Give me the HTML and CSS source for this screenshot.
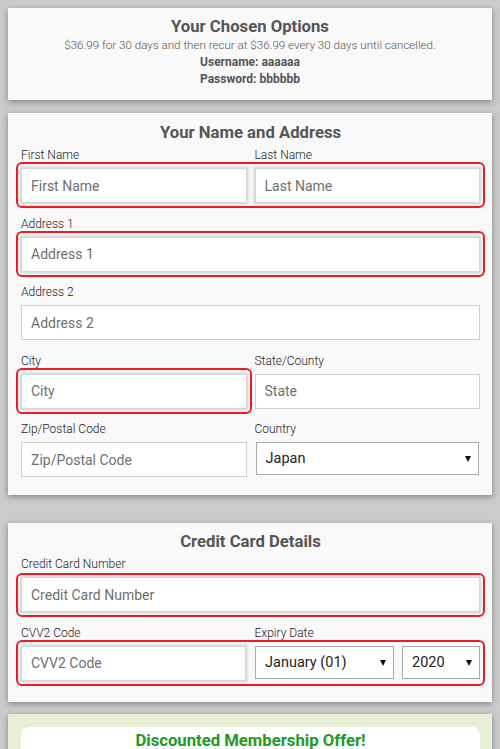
FILE: index.html
```html
<!DOCTYPE html>
<html lang="en">
<head>
<meta charset="utf-8">
<title>Checkout</title>
<link rel="stylesheet" href="styles.css">
</head>
<body>
<div class="page">
  <section class="card card-options">
    <h2 class="card-title">Your Chosen Options</h2>
    <p class="summary">$36.99 for 30 days and then recur at $36.99 every 30 days until cancelled.</p>
    <p class="cred">Username: aaaaaa</p>
    <p class="cred">Password: bbbbbb</p>
  </section>

  <section class="card card-form">
    <h2 class="card-title">Your Name and Address</h2>
    <div class="rows">
      <div class="row">
        <div class="labels two"><label>First Name</label><label>Last Name</label></div>
        <div class="controls two err">
          <input class="field bad" placeholder="First Name">
          <input class="field bad" placeholder="Last Name">
        </div>
      </div>
      <div class="row">
        <div class="labels"><label>Address 1</label></div>
        <div class="controls err">
          <input class="field bad" placeholder="Address 1">
        </div>
      </div>
      <div class="row">
        <div class="labels"><label>Address 2</label></div>
        <div class="controls">
          <input class="field" placeholder="Address 2">
        </div>
      </div>
      <div class="row">
        <div class="labels two"><label>City</label><label>State/County</label></div>
        <div class="controls two">
          <div class="cell err"><input class="field bad" placeholder="City"></div>
          <input class="field" placeholder="State">
        </div>
      </div>
      <div class="row">
        <div class="labels two"><label>Zip/Postal Code</label><label>Country</label></div>
        <div class="controls two">
          <input class="field" placeholder="Zip/Postal Code">
          <div class="select-wrap country"><select class="select"><option>Japan</option></select></div>
        </div>
      </div>
    </div>
  </section>

  <section class="card card-cc">
    <h2 class="card-title">Credit Card Details</h2>
    <div class="rows">
      <div class="row">
        <div class="labels"><label>Credit Card Number</label></div>
        <div class="controls err err-tight">
          <input class="field bad" placeholder="Credit Card Number">
        </div>
      </div>
      <div class="row">
        <div class="labels two"><label>CVV2 Code</label><label>Expiry Date</label></div>
        <div class="controls two err">
          <input class="field bad" placeholder="CVV2 Code">
          <div class="expiry">
            <div class="select-wrap month"><select class="select"><option>January (01)</option></select></div>
            <div class="select-wrap year"><select class="select"><option>2020</option></select></div>
          </div>
        </div>
      </div>
    </div>
  </section>

  <section class="card card-offer">
    <div class="offer-box">
      <h2 class="offer-title">Discounted Membership Offer!</h2>
    </div>
  </section>
</div>
</body>
</html>
```

FILE: styles.css
```css
html, body {
  margin: 0;
  padding: 0;
}
body {
  background: #cbcbcb;
  font-family: Roboto, "Liberation Sans", Arial, sans-serif;
  color: #333;
  overflow: hidden;
}
.page {
  padding: 8px 8px 0 8px;
  display: flex;
  flex-direction: column;
}
.card {
  background: #f9f9f9;
  box-shadow: 0 2px 6px rgba(0, 0, 0, 0.35);
}
.card-title {
  margin: 0;
  font-size: 16.7px;
  line-height: 20px;
  font-weight: 700;
  color: #555;
  text-align: center;
}
.card-options {
  padding: 9px 12px 12px;
  text-align: center;
}
.summary {
  margin: 0;
  font-size: 11.6px;
  line-height: 17px;
  font-weight: 300;
  color: #555;
}
.cred {
  margin: 0;
  font-size: 12px;
  line-height: 17px;
  font-weight: 700;
  color: #555;
}
.card-form {
  margin-top: 13px;
  padding: 10px 12px 18px 13px;
}
.card-cc {
  margin-top: 28px;
  padding: 9px 12px 21px 13px;
}
.rows {
  margin-top: 5px;
  display: flex;
  flex-direction: column;
  gap: 13.5px;
}
.row {
  display: flex;
  flex-direction: column;
  gap: 6px;
}
.labels {
  display: grid;
  grid-template-columns: 1fr;
}
.labels.two,
.controls.two {
  grid-template-columns: 1fr 1fr;
  column-gap: 8px;
}
.labels label {
  font-size: 12px;
  line-height: 14px;
  font-weight: 300;
  color: #222;
}
.controls {
  display: grid;
  grid-template-columns: 1fr;
  position: relative;
}
.cell {
  position: relative;
  display: flex;
}
.err::after {
  content: "";
  position: absolute;
  top: -6px;
  bottom: -5px;
  left: -5px;
  right: -5px;
  border: 2px solid #ec1c24;
  border-radius: 6px;
  pointer-events: none;
}
.err-tight::after {
  top: -4px;
  bottom: -5px;
}
.field {
  box-sizing: border-box;
  width: 100%;
  height: 35px;
  margin: 0;
  padding: 0 9px;
  border: 1px solid #cfcfcf;
  border-radius: 0;
  background: #fff;
  font-family: inherit;
  font-size: 14px;
  color: #333;
  outline: none;
}
.field::placeholder {
  color: #6f6f6f;
}
.field.bad {
  border-color: #d6d6d6;
  box-shadow: 0 0 3px 1px rgba(0, 0, 0, 0.18);
}
.select-wrap {
  position: relative;
  display: flex;
  height: 33px;
}
.select-wrap::after {
  content: "";
  position: absolute;
  right: 8px;
  top: 14px;
  border-left: 3px solid transparent;
  border-right: 3px solid transparent;
  border-top: 6px solid #111;
  pointer-events: none;
}
.country {
  margin-left: 1px;
  margin-right: 1px;
  height: 33px;
}
.select {
  -webkit-appearance: none;
  appearance: none;
  box-sizing: border-box;
  width: 100%;
  height: 100%;
  margin: 0;
  padding: 0 20px 0 9px;
  border: 1px solid #aaa;
  border-radius: 0;
  background: #fff;
  font-family: inherit;
  font-size: 14.5px;
  color: #222;
  outline: none;
}
.expiry {
  display: flex;
  gap: 8px;
  padding-left: 1px;
}
.month {
  width: 139px;
}
.year {
  width: 78px;
}
.card-offer {
  margin-top: 12px;
  background: #e8efd7;
  padding: 13px 12px 0 13px;
  height: 60px;
}
.offer-box {
  background: #fff;
  border-radius: 8px 8px 0 0;
  padding-top: 4px;
  height: 100%;
}
.offer-title {
  margin: 0;
  font-size: 16.7px;
  line-height: 20px;
  font-weight: 700;
  color: #249a24;
  text-align: center;
}
```
